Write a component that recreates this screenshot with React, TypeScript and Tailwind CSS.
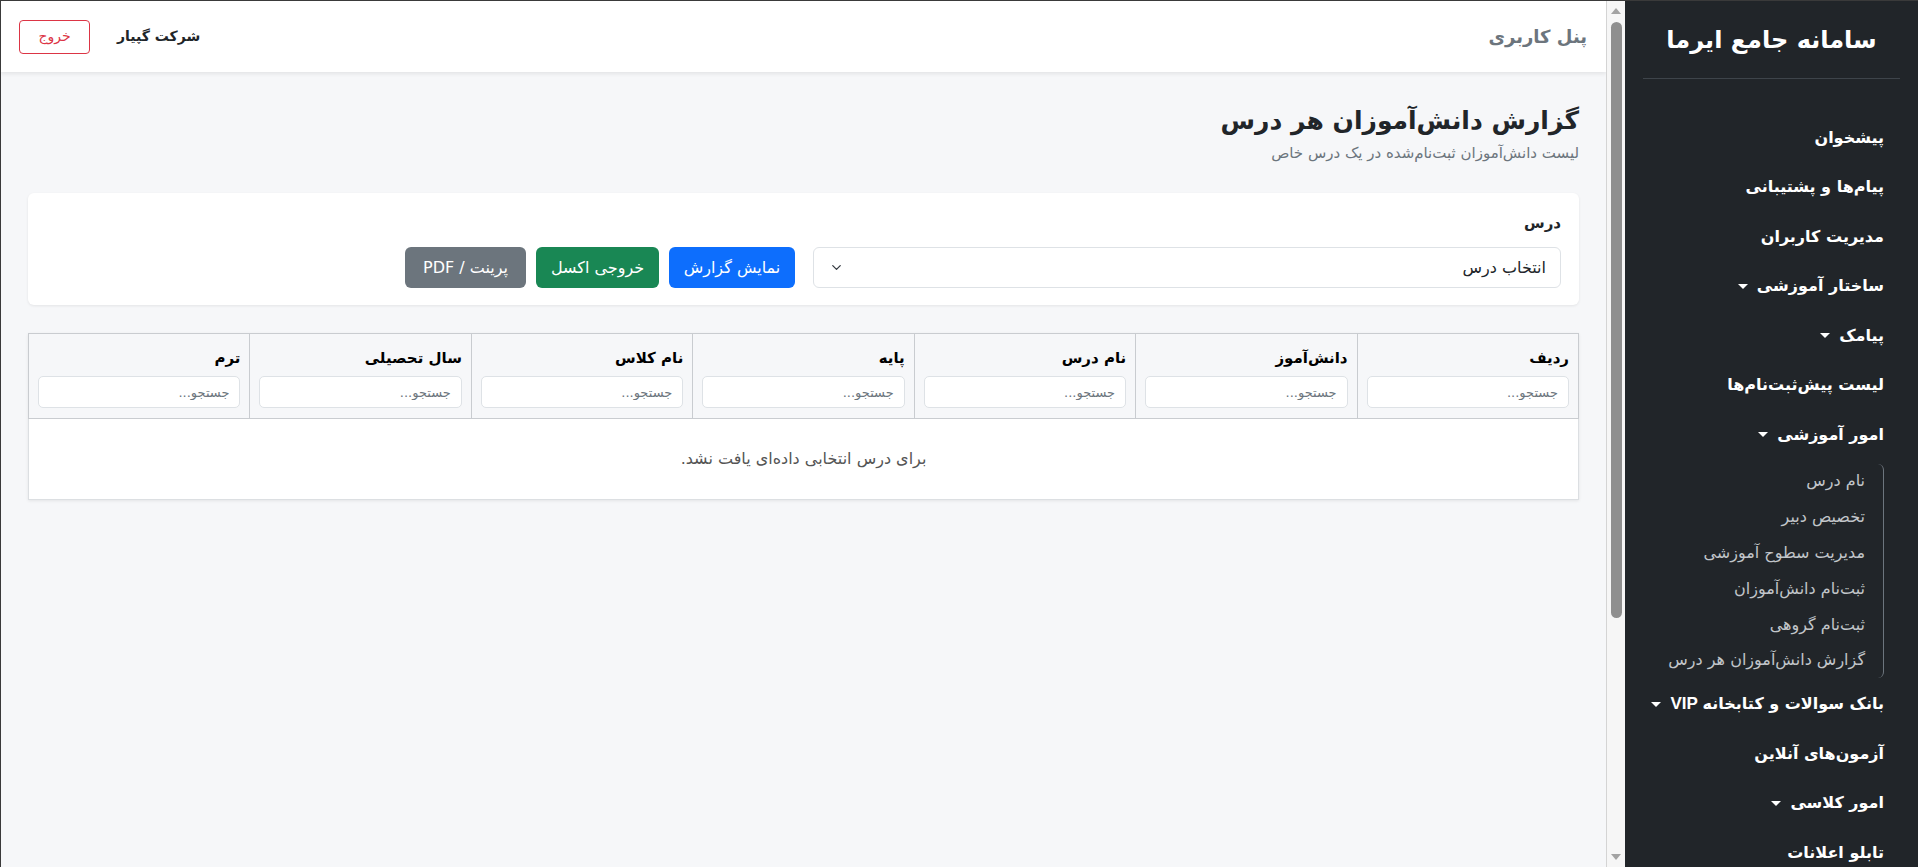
import { ChevronDown } from "lucide-react"

const columns = ["ردیف", "دانش‌آموز", "نام درس", "پایه", "نام کلاس", "سال تحصیلی", "ترم"]

type NavItem = { label: string; latin?: string; caret?: boolean }

const topNav: NavItem[] = [
  { label: "پیشخوان" },
  { label: "پیام‌ها و پشتیبانی" },
  { label: "مدیریت کاربران" },
  { label: "ساختار آموزشی", caret: true },
  { label: "پیامک", caret: true },
  { label: "لیست پیش‌ثبت‌نام‌ها" },
  { label: "امور آموزشی", caret: true },
]

const subNav = [
  "نام درس",
  "تخصیص دبیر",
  "مدیریت سطوح آموزشی",
  "ثبت‌نام دانش‌آموزان",
  "ثبت‌نام گروهی",
  "گزارش دانش‌آموزان هر درس",
]

const bottomNav: NavItem[] = [
  { label: "بانک سوالات و کتابخانه", latin: "VIP", caret: true },
  { label: "آزمون‌های آنلاین" },
  { label: "امور کلاسی", caret: true },
  { label: "تابلو اعلانات" },
]

const Caret = () => (
  <span className="mr-[9px] inline-block h-0 w-0 border-x-[5px] border-t-[5px] border-x-transparent border-t-white align-middle" />
)

const NavLink = ({ item }: { item: NavItem }) => (
  <div className="flex h-[49.5px] shrink-0 items-center pr-[34px] text-[16px] font-semibold text-white">
    <span>
      {item.label}
      {item.latin && <span className="font-['Liberation_Sans',sans-serif] text-[17px]"> {item.latin}</span>}
    </span>
    {item.caret && <Caret />}
  </div>
)

const Sidebar = () => {
  return (
    <aside className="flex h-full w-[293px] shrink-0 flex-col overflow-hidden bg-[#212529]">
      <div className="mx-[18px] flex h-[78px] shrink-0 items-center justify-center border-b border-[#3e444a] text-[24px] font-bold text-white">
        سامانه جامع ایرما
      </div>
      <nav className="shrink-0 pt-[34px]">
        {topNav.map((item) => (
          <NavLink key={item.label} item={item} />
        ))}
        <div className="mr-[34px] mt-[4px] mb-[1px] rounded-r-md border-r border-[#6c757d] pr-[18px]">
          {subNav.map((s) => (
            <div key={s} className="flex h-[35.8px] items-center text-[16px] text-[#c2c6ca]">
              {s}
            </div>
          ))}
        </div>
        {bottomNav.map((item) => (
          <NavLink key={item.label} item={item} />
        ))}
      </nav>
    </aside>
  )
}

// the main pane's scrollbar, drawn since the headless browser hides it
const ScrollTrack = () => (
  <div className="flex h-full w-[19px] shrink-0 flex-col items-center border-l border-[#d4d4d4] bg-[#f6f6f6]">
    <span className="mt-[7px] h-0 w-0 border-x-[5px] border-b-[6px] border-x-transparent border-b-[#a3a3a3]" />
    <div className="mt-[8px] h-[596px] w-[11px] rounded-full bg-[#8f8f8f]" />
    <div className="flex-1" />
    <span className="mb-[7px] h-0 w-0 border-x-[5px] border-t-[6px] border-x-transparent border-t-[#a3a3a3]" />
  </div>
)

const Header = () => {
  return (
    <header className="flex h-[71px] items-center justify-between bg-white pr-[19px] pl-[18px] shadow-[0_2px_4px_rgba(0,0,0,0.08)]">
      <span className="text-[18px] font-semibold text-[#6c757d]">پنل کاربری</span>
      <div className="flex items-center gap-[27px]">
        <span className="text-[14px] font-bold text-[#212529]">شرکت گپیار</span>
        <button className="h-[34px] w-[71px] rounded-[4px] border border-[#dc3545] text-[14px] text-[#dc3545]">
          خروج
        </button>
      </div>
    </header>
  )
}

const FilterCard = () => {
  return (
    <div className="rounded-[6px] bg-white px-[18px] pt-[19px] pb-[17px] shadow-[0_1px_3px_rgba(0,0,0,0.08)]">
      <label className="block text-[15px] font-bold leading-[22px] text-[#212529]">درس</label>
      <div className="mt-[13px] flex items-center gap-[18px]">
        <div className="flex h-[41px] w-[748px] items-center justify-between rounded-[6px] border border-[#dee2e6] bg-white pr-[14px] pl-[15px] text-[16px] text-[#212529]">
          <span>انتخاب درس</span>
          <ChevronDown size={15} strokeWidth={2} className="text-[#343a40]" />
        </div>
        <div className="flex gap-[10px]">
          <button className="h-[41px] w-[126px] rounded-[6px] bg-[#0d6efd] text-[16px] text-white">نمایش گزارش</button>
          <button className="h-[41px] w-[123px] rounded-[6px] bg-[#198754] text-[16px] text-white">خروجی اکسل</button>
          <button className="h-[41px] w-[121px] rounded-[6px] bg-[#6c757d] text-[16px] text-white">پرینت / PDF</button>
        </div>
      </div>
    </div>
  )
}

const ReportTable = () => {
  return (
    <table className="mt-[28px] w-full table-fixed border-collapse bg-white shadow-[0_1px_3px_rgba(0,0,0,0.08)]">
      <thead>
        <tr className="bg-[#f6f7f9]">
          {columns.map((c) => (
            <th key={c} className="border border-[#c9ccd0] px-[9px] pt-[12px] pb-[10px] text-right align-top">
              <div className="text-[15px] font-bold leading-[24px] text-black">{c}</div>
              <input
                placeholder="جستجو..."
                className="mt-[6px] block h-[32px] w-full rounded-[5px] border border-[#dee2e6] bg-white px-[10px] text-[13px] font-normal outline-none placeholder:text-[#6c757d]"
              />
            </th>
          ))}
        </tr>
      </thead>
      <tbody>
        <tr>
          <td colSpan={7} className="h-[81px] border border-[#dcdfe2] text-center text-[16px] text-[#555]">
            برای درس انتخابی داده‌ای یافت نشد.
          </td>
        </tr>
      </tbody>
    </table>
  )
}

export default function App() {
  return (
    <div
      dir="rtl"
      className="flex h-[867px] w-full overflow-hidden border-t border-l border-[#3a3a3a] font-['DejaVu_Sans',sans-serif]"
    >
      <Sidebar />
      <ScrollTrack />
      <div className="h-full min-w-0 flex-1 overflow-hidden bg-[#f6f7f9]">
        <Header />
        <main className="px-[27px] pt-[32px]">
          <h1 className="text-[25px] font-bold leading-[34px] text-[#212529]">گزارش دانش‌آموزان هر درس</h1>
          <p className="mt-[5px] text-[15px] leading-[21px] text-[#6c757d]">لیست دانش‌آموزان ثبت‌نام‌شده در یک درس خاص</p>
          <div className="mt-[29px]">
            <FilterCard />
          </div>
          <ReportTable />
        </main>
      </div>
    </div>
  )
}
